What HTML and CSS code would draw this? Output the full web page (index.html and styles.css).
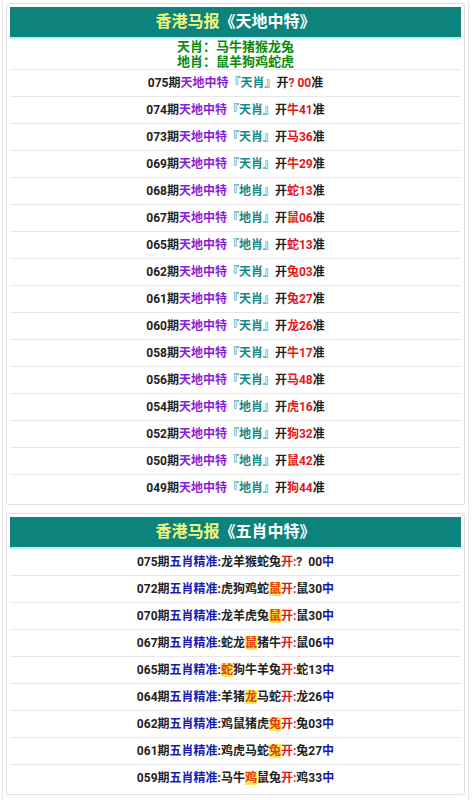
FILE: index.html
```html
<!DOCTYPE html>
<html lang="zh">
<head>
<meta charset="utf-8">
<link rel="stylesheet" href="styles.css">
</head>
<body>
<div class="page">
  <div class="card">
    <div class="head"><span class="hl">香港马报</span>《天地中特》</div>
    <div class="sub">天肖：马牛猪猴龙兔<br>地肖：鼠羊狗鸡蛇虎</div>
    <div class="row">075期<span class="pu">天地中特</span><span class="te">『天肖』</span>开<span class="rd">?&nbsp;00</span>准</div>
    <div class="row">074期<span class="pu">天地中特</span><span class="te">『天肖』</span>开<span class="rd">牛41</span>准</div>
    <div class="row">073期<span class="pu">天地中特</span><span class="te">『天肖』</span>开<span class="rd">马36</span>准</div>
    <div class="row">069期<span class="pu">天地中特</span><span class="te">『天肖』</span>开<span class="rd">牛29</span>准</div>
    <div class="row">068期<span class="pu">天地中特</span><span class="te">『地肖』</span>开<span class="rd">蛇13</span>准</div>
    <div class="row">067期<span class="pu">天地中特</span><span class="te">『地肖』</span>开<span class="rd">鼠06</span>准</div>
    <div class="row">065期<span class="pu">天地中特</span><span class="te">『地肖』</span>开<span class="rd">蛇13</span>准</div>
    <div class="row">062期<span class="pu">天地中特</span><span class="te">『天肖』</span>开<span class="rd">兔03</span>准</div>
    <div class="row">061期<span class="pu">天地中特</span><span class="te">『天肖』</span>开<span class="rd">兔27</span>准</div>
    <div class="row">060期<span class="pu">天地中特</span><span class="te">『天肖』</span>开<span class="rd">龙26</span>准</div>
    <div class="row">058期<span class="pu">天地中特</span><span class="te">『天肖』</span>开<span class="rd">牛17</span>准</div>
    <div class="row">056期<span class="pu">天地中特</span><span class="te">『天肖』</span>开<span class="rd">马48</span>准</div>
    <div class="row">054期<span class="pu">天地中特</span><span class="te">『地肖』</span>开<span class="rd">虎16</span>准</div>
    <div class="row">052期<span class="pu">天地中特</span><span class="te">『地肖』</span>开<span class="rd">狗32</span>准</div>
    <div class="row">050期<span class="pu">天地中特</span><span class="te">『地肖』</span>开<span class="rd">鼠42</span>准</div>
    <div class="row">049期<span class="pu">天地中特</span><span class="te">『地肖』</span>开<span class="rd">狗44</span>准</div>
  </div>
  <div class="card">
    <div class="head"><span class="hl">香港马报</span>《五肖中特》</div>
    <div class="row r2 first">075期<span class="bl">五肖精准</span>:龙羊猴蛇兔<span class="rd">开:</span>?&nbsp;&nbsp;00<span class="bl">中</span></div>
    <div class="row r2">072期<span class="bl">五肖精准</span>:虎狗鸡蛇<span class="mk">鼠</span><span class="rd">开:</span>鼠30<span class="bl">中</span></div>
    <div class="row r2">070期<span class="bl">五肖精准</span>:龙羊虎兔<span class="mk">鼠</span><span class="rd">开:</span>鼠30<span class="bl">中</span></div>
    <div class="row r2">067期<span class="bl">五肖精准</span>:蛇龙<span class="mk">鼠</span>猪牛<span class="rd">开:</span>鼠06<span class="bl">中</span></div>
    <div class="row r2">065期<span class="bl">五肖精准</span>:<span class="mk">蛇</span>狗牛羊兔<span class="rd">开:</span>蛇13<span class="bl">中</span></div>
    <div class="row r2">064期<span class="bl">五肖精准</span>:羊猪<span class="mk">龙</span>马蛇<span class="rd">开:</span>龙26<span class="bl">中</span></div>
    <div class="row r2">062期<span class="bl">五肖精准</span>:鸡鼠猪虎<span class="mk">兔</span><span class="rd">开:</span>兔03<span class="bl">中</span></div>
    <div class="row r2">061期<span class="bl">五肖精准</span>:鸡虎马蛇<span class="mk">兔</span><span class="rd">开:</span>兔27<span class="bl">中</span></div>
    <div class="row r2">059期<span class="bl">五肖精准</span>:马牛<span class="mk">鸡</span>鼠兔<span class="rd">开:</span>鸡33<span class="bl">中</span></div>
  </div>
</div>
</body>
</html>
```

FILE: styles.css
```css
html, body {
  margin: 0;
  padding: 0;
  background: #fff;
}
body {
  font-family: Roboto, "Noto Sans CJK SC", sans-serif;
  font-weight: bold;
  color: #222;
}
.page {
  margin: 0 3px 0 2px;
  border-left: 1px solid #e6e6e6;
  border-right: 1px solid #e6e6e6;
  padding: 3px 3px 0 3px;
  min-height: 797px;
}
.card {
  border: 1px solid #e2e2e2;
  border-radius: 3px;
  padding: 3px;
  margin-bottom: 8px;
  box-shadow: 0 0 2px rgba(0,0,0,0.06);
}
.head {
  background: #0d837e;
  color: #fff;
  text-align: center;
  font-size: 16px;
  height: 30px;
  line-height: 30px;
  border-bottom: 2px solid #bfeef0;
}
.hl { color: #f3f57a; }
.sub {
  color: #0a8a0a;
  text-align: center;
  font-size: 13px;
  line-height: 15px;
  height: 30px;
}
.row {
  border-top: 1px solid #e8e8e8;
  text-align: center;
  font-size: 12px;
  height: 26px;
  line-height: 26px;
  white-space: nowrap;
}
.r2.first { border-top: none; }
.pu { color: #8a1ed6; }
.te { color: #138a8a; }
.rd { color: #e01818; }
.bl { color: #1a1ab0; }
.mk { background: #ffe94a; color: #e53b10; }
```
